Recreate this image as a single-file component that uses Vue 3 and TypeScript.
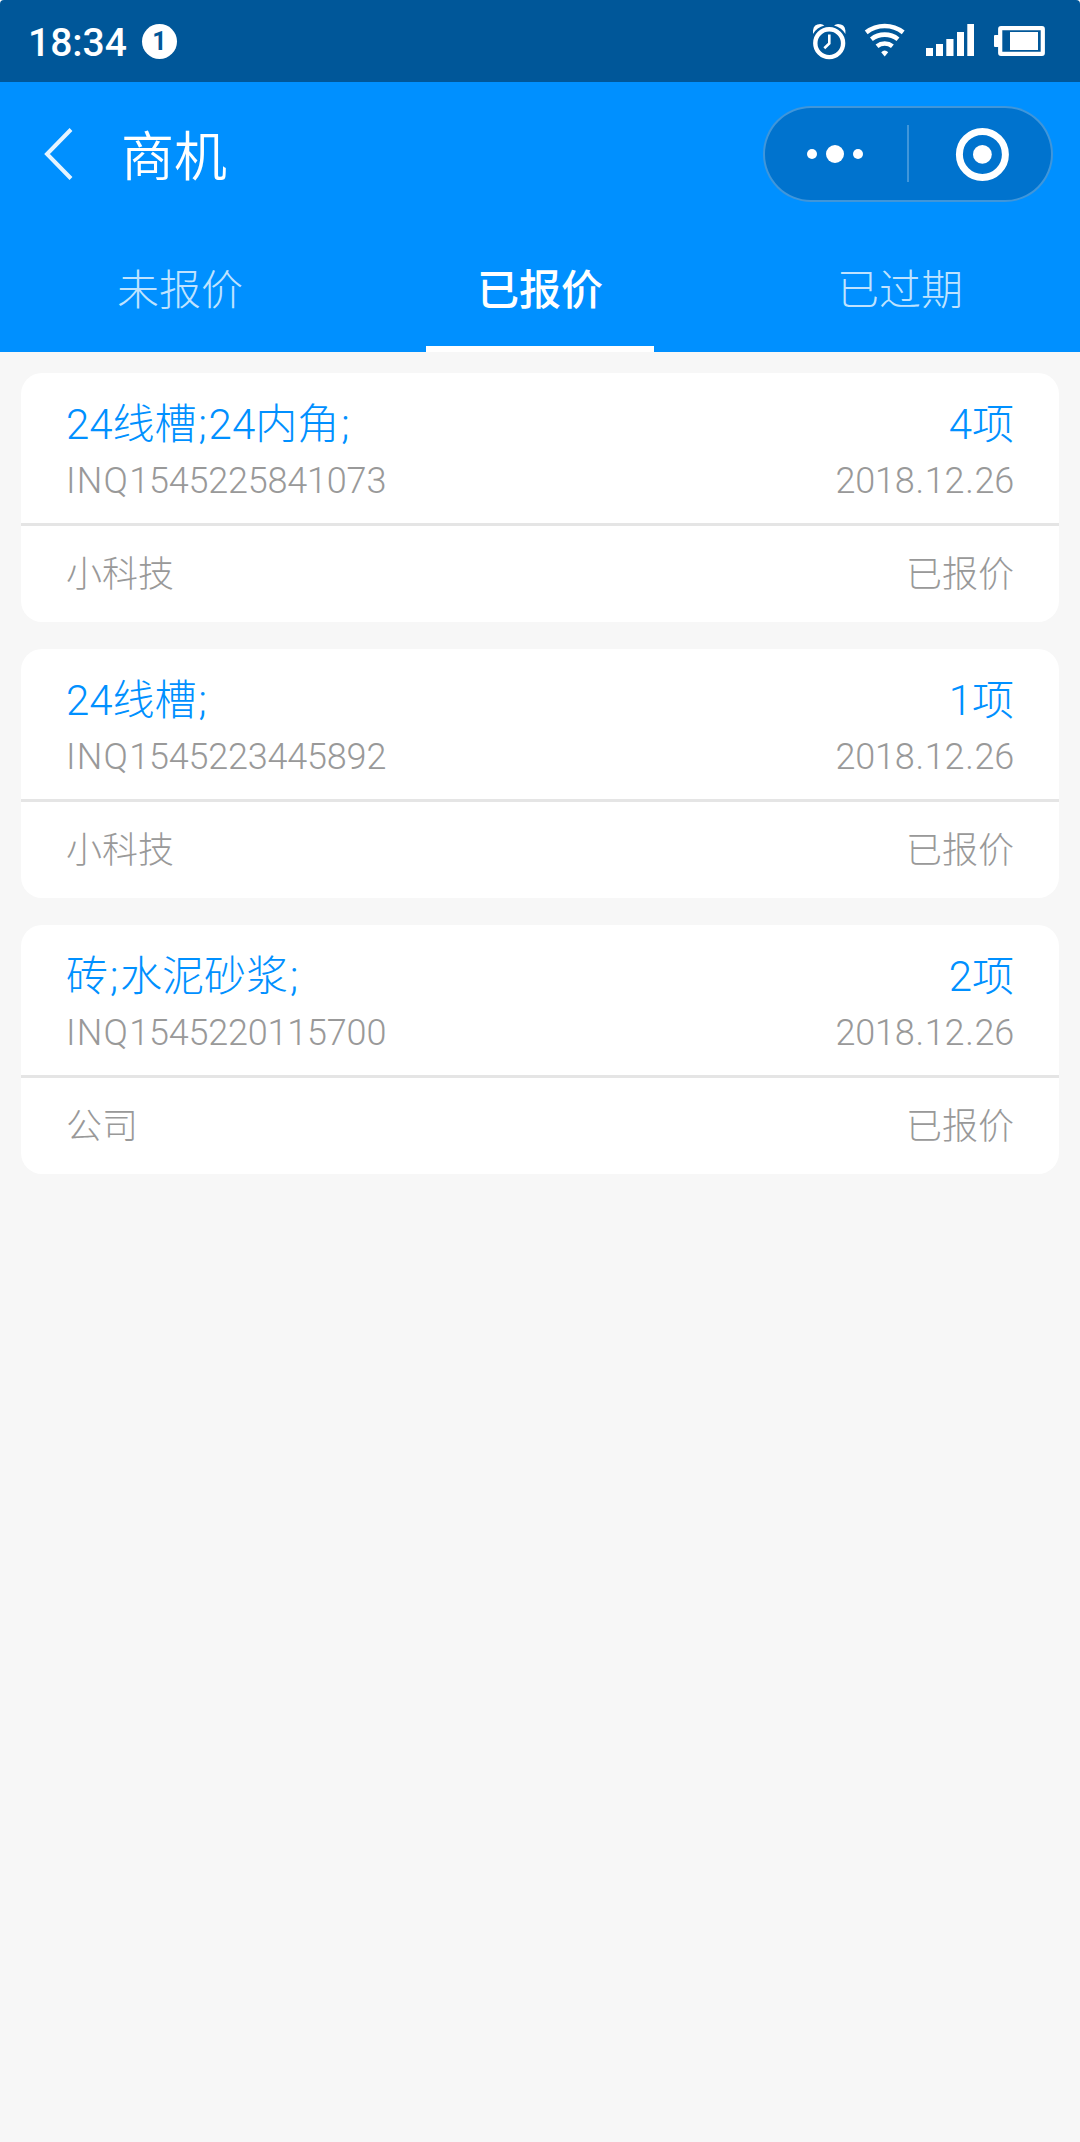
<script setup lang="ts">
interface Inquiry {
  title: string
  count: number
  code: string
  date: string
  company: string
  status: string
}

const tabs: string[] = ['未报价', '已报价', '已过期']
const activeTab = 1

const inquiries: Inquiry[] = [
  { title: '24线槽;24内角;', count: 4, code: '1545225841073', date: '2018.12.26', company: '小科技', status: '已报价' },
  { title: '24线槽;', count: 1, code: '1545223445892', date: '2018.12.26', company: '小科技', status: '已报价' },
  { title: '砖;水泥砂浆;', count: 2, code: '1545220115700', date: '2018.12.26', company: '公司', status: '已报价' },
]

// Goods in a title, without the separators that close each name
const goods = (title: string): string[] => title.split(';').filter(Boolean)
</script>

<template>
  <div class="screen">
    <div class="status-bar">
      <span class="time">18:34</span>
      <span class="badge">1</span>
      <svg class="status-icons" width="240" height="82" viewBox="806 0 240 82">
        <g fill="none" stroke="#fff">
          <circle cx="829.2" cy="43.2" r="13.9" stroke-width="4.4" />
          <path d="M829.3 34.5V43.4L824.3 48.3" stroke-width="2.6" />
          <path d="M866.2 32.4A30 30 0 0 1 903.2 32.4" stroke-width="4.6" />
          <path d="M871.4 39.2A21.5 21.5 0 0 1 898 39.2" stroke-width="4.6" />
          <path d="M877 46.2A12.5 12.5 0 0 1 892.4 46.2" stroke-width="4.6" />
          <rect x="1000.2" y="28.2" width="42.6" height="25.6" rx="0.8" stroke-width="4.2" />
        </g>
        <g fill="#fff">
          <path d="M813 34V30.4Q813.8 24 820.4 24Q822.6 24 824.4 25.6A18.4 18.4 0 0 0 813 34Z" />
          <path d="M845.4 34V30.4Q844.6 24 838 24Q835.8 24 834 25.6A18.4 18.4 0 0 1 845.4 34Z" />
          <path d="M881.2 52.2Q884.7 49 888.2 52.2L884.7 56.4Z" />
          <rect x="926" y="48" width="7" height="8" />
          <rect x="936" y="44" width="7" height="12" />
          <rect x="946.3" y="39" width="7.2" height="17" />
          <rect x="957" y="32" width="7" height="24" />
          <rect x="967.3" y="24" width="6.7" height="32" />
          <rect x="994" y="35" width="5" height="12" rx="1" />
          <rect x="1010" y="32" width="28" height="18" />
        </g>
      </svg>
    </div>

    <header class="nav">
      <svg class="back" width="30" height="54" viewBox="0 0 30 54">
        <path d="M27 2.5L3 27L27 51.5" fill="none" stroke="#e6f4ff" stroke-width="4" />
      </svg>
      <h1>商机</h1>
      <div class="capsule">
        <svg width="286" height="92" viewBox="765 108 286 92">
          <g fill="#fff">
            <circle cx="812" cy="154" r="5" />
            <circle cx="835" cy="154" r="9" />
            <circle cx="858" cy="154" r="5" />
            <circle cx="982.4" cy="154.4" r="9.4" />
          </g>
          <rect x="907" y="125" width="2" height="57" fill="#fff" fill-opacity=".25" />
          <circle cx="982.4" cy="154.4" r="23" fill="none" stroke="#fff" stroke-width="7" />
        </svg>
      </div>
    </header>

    <nav class="tabs">
      <div v-for="(tab, i) in tabs" :key="tab" class="tab" :class="{ active: i === activeTab }">
        <span>{{ tab }}</span>
      </div>
    </nav>

    <main class="list">
      <article v-for="item in inquiries" :key="item.code" class="card">
        <div class="card-head">
          <div class="row title">
            <span><template v-for="name in goods(item.title)" :key="name">{{ name }}<i class="sep">;</i></template></span>
            <span>{{ item.count }}项</span>
          </div>
          <div class="row meta">
            <span><span class="prefix">INQ</span>{{ item.code }}</span>
            <span><template v-for="(part, i) in item.date.split('.')" :key="i"><i v-if="i" class="dot">.</i>{{ part }}</template></span>
          </div>
        </div>
        <div class="row card-foot"><span>{{ item.company }}</span><span>{{ item.status }}</span></div>
      </article>
    </main>
  </div>
</template>

<style>
body {
  margin: 0;
  background: #fff;
}
</style>

<style scoped>
.screen {
  width: 1080px;
  height: 2142px;
  overflow: hidden;
  background: #f7f7f7;
  border-radius: 4px 4px 0 0;
  font-family: Roboto, "Noto Sans CJK SC", sans-serif;
  font-weight: 300;
  font-kerning: none;
}
.status-bar {
  display: flex;
  align-items: center;
  height: 82px;
  padding: 0 34px 0 28px;
  box-sizing: border-box;
  background: #005799;
  color: #fff;
}
.time {
  width: 114px;
  padding-top: 4px;
  font-size: 39px;
  font-weight: 500;
  line-height: 46px;
}
.badge {
  width: 35px;
  height: 35px;
  border-radius: 50%;
  background: #fff;
  color: #005799;
  font-size: 25px;
  font-weight: 700;
  line-height: 35px;
  text-align: center;
}
.status-icons {
  margin-left: auto;
}
.nav {
  display: flex;
  align-items: center;
  height: 144px;
  padding: 0 27px 0 44px;
  box-sizing: border-box;
  background: #0090ff;
}
.back {
  flex: none;
}
.nav h1 {
  margin: 0 0 0 47px;
  padding-top: 7px;
  color: #fff;
  font-size: 53px;
  font-weight: 350;
  line-height: 72px;
}
.capsule {
  width: 290px;
  height: 96px;
  margin-left: auto;
  box-sizing: border-box;
  border: 2px solid rgba(255, 255, 255, 0.25);
  border-radius: 48px;
  background: #0073ce;
}
.capsule svg {
  display: block;
}
.tabs {
  display: flex;
  height: 126px;
  background: #0090ff;
}
.tab {
  display: flex;
  flex: 1;
  justify-content: center;
  color: #bfe3ff;
  font-size: 42px;
  line-height: 130px;
}
.tab span {
  box-sizing: border-box;
  width: 228px;
  height: 126px;
  text-align: center;
}
.tab.active {
  color: #fff;
  font-weight: 500;
}
.tab.active span {
  border-bottom: 6px solid #fff;
}
.list {
  display: flex;
  flex-direction: column;
  gap: 27px;
  padding: 21px;
}
.card {
  border-radius: 21px;
  background: #fff;
}
.row {
  display: flex;
  justify-content: space-between;
  padding: 0 45px;
}
.card-head {
  height: 128px;
  padding-top: 22px;
  border-bottom: 3px solid #e5e5e5;
}
.title {
  color: #0090ff;
  font-size: 42px;
  line-height: 60px;
}
.sep,
.dot {
  display: inline-block;
  width: 12px;
  font-style: normal;
  text-align: center;
}
.dot {
  width: 10.2px;
}
.meta {
  color: #999;
  font-size: 36px;
  line-height: 52px;
  letter-spacing: -0.2px;
}
.prefix {
  letter-spacing: 1.2px;
}
.card-foot {
  height: 96px;
  color: #999;
  font-size: 36px;
  line-height: 98px;
}
</style>
